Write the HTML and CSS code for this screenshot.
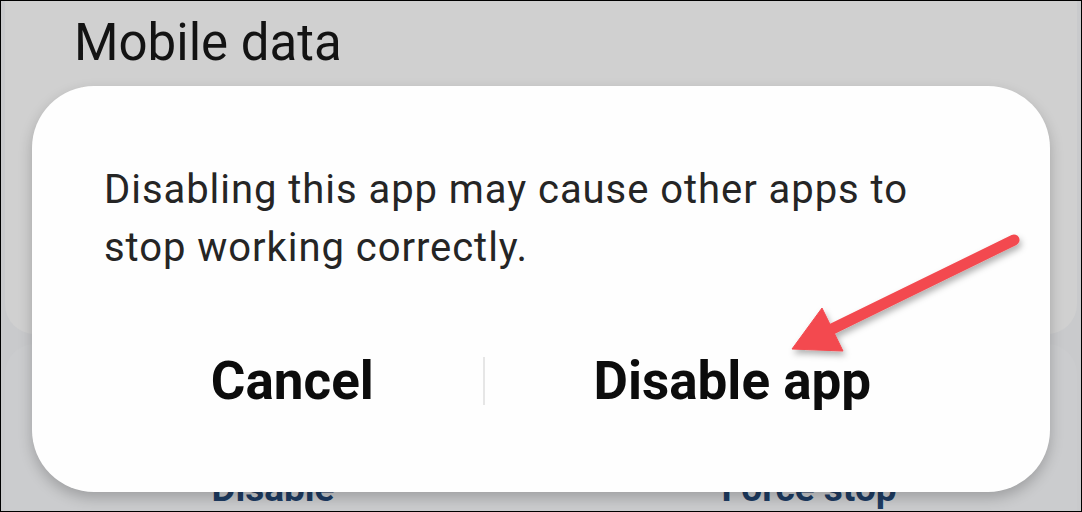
FILE: index.html
```html
<!DOCTYPE html>
<html lang="en">

<head>
    <meta charset="UTF-8">
    <meta name="viewport" content="width=device-width, initial-scale=1.0">
    <title>Disable app</title>
    <link rel="stylesheet" href="styles.css">
</head>

<body>

    <div id="frame">
        <div id="screen">
            <div id="info-card">
                <h1 id="info-title">Mobile data</h1>
                <p id="info-sub">No data used</p>
            </div>
            <div id="actions-card">
                <span class="action-link">Disable</span>
                <span class="action-link">Force stop</span>
            </div>
        </div>

        <div id="dialog">
            <p id="dialog-message">Disabling this app may cause other apps to stop working correctly.</p>
            <div id="dialog-buttons">
                <button class="dialog-button">Cancel</button>
                <span class="button-divider"></span>
                <button class="dialog-button">Disable app</button>
            </div>
        </div>

        <svg id="pointer" width="1082" height="512" viewBox="0 0 1082 512">
            <defs>
                <filter id="arrow-shadow" x="-20%" y="-20%" width="140%" height="140%">
                    <feDropShadow dx="2" dy="4" stdDeviation="3" flood-color="#000" flood-opacity="0.3" />
                </filter>
            </defs>
            <g filter="url(#arrow-shadow)" fill="#f34a50" stroke="#f34a50">
                <line x1="1014" y1="240" x2="830" y2="330" stroke-width="11" stroke-linecap="round" />
                <polygon points="792,349 822,308 843,351" stroke-width="1" stroke-linejoin="round" />
            </g>
        </svg>
    </div>

</body>

</html>
```

FILE: styles.css
```css
* {
    box-sizing: border-box;
}

body {
    margin: 0;
    padding: 0;
    background: #000;
    font-family: 'Roboto', 'Liberation Sans', sans-serif;
}

#frame {
    position: relative;
    width: 1082px;
    height: 512px;
    border: 1px solid #000;
    overflow: hidden;
    background-color: #c9cacc;
}

#screen {
    display: flex;
    flex-direction: column;
    gap: 10px;
    height: 100%;
}

#info-card {
    height: 336px;
    margin: 0 4px;
    padding: 12px 0 0 69px;
    background-color: #d0d0d0;
    border-radius: 0 0 30px 30px;
}

#info-title {
    margin: 0;
    font-size: 51px;
    font-weight: 400;
    line-height: 60px;
    color: #131313;
}

#info-sub {
    margin: 6px 0 0 6px;
    font-size: 34px;
    line-height: 40px;
    color: #4c4c4c;
}

#actions-card {
    flex: 1;
    display: flex;
    margin: 0 4px;
    padding-top: 123px;
    background-color: #cbccce;
    border-radius: 30px 30px 0 0;
}

.action-link {
    flex: 1;
    text-align: center;
    font-size: 37px;
    font-weight: 700;
    line-height: 44px;
    color: #1e3c63;
}

#dialog {
    position: absolute;
    left: 31px;
    top: 85px;
    width: 1018px;
    padding: 75px 70px 81px 70px;
    background-color: #fefefe;
    border-radius: 62px;
    box-shadow: 0 6px 14px rgba(0, 0, 0, 0.22);
}

#dialog-message {
    margin: 0 0 74px 2px;
    font-size: 40px;
    letter-spacing: 0.95px;
    line-height: 58px;
    color: #252525;
}

#dialog-buttons {
    display: flex;
    align-items: center;
}

.dialog-button {
    flex: 1 1 auto;
    padding: 0;
    border: none;
    background: none;
    font-family: inherit;
    font-size: 53px;
    font-weight: 700;
    line-height: 60px;
    color: #0c0c0c;
}

.button-divider {
    width: 2px;
    height: 48px;
    background-color: #e6e6e6;
}

#pointer {
    position: absolute;
    left: -1px;
    top: -1px;
}
```
